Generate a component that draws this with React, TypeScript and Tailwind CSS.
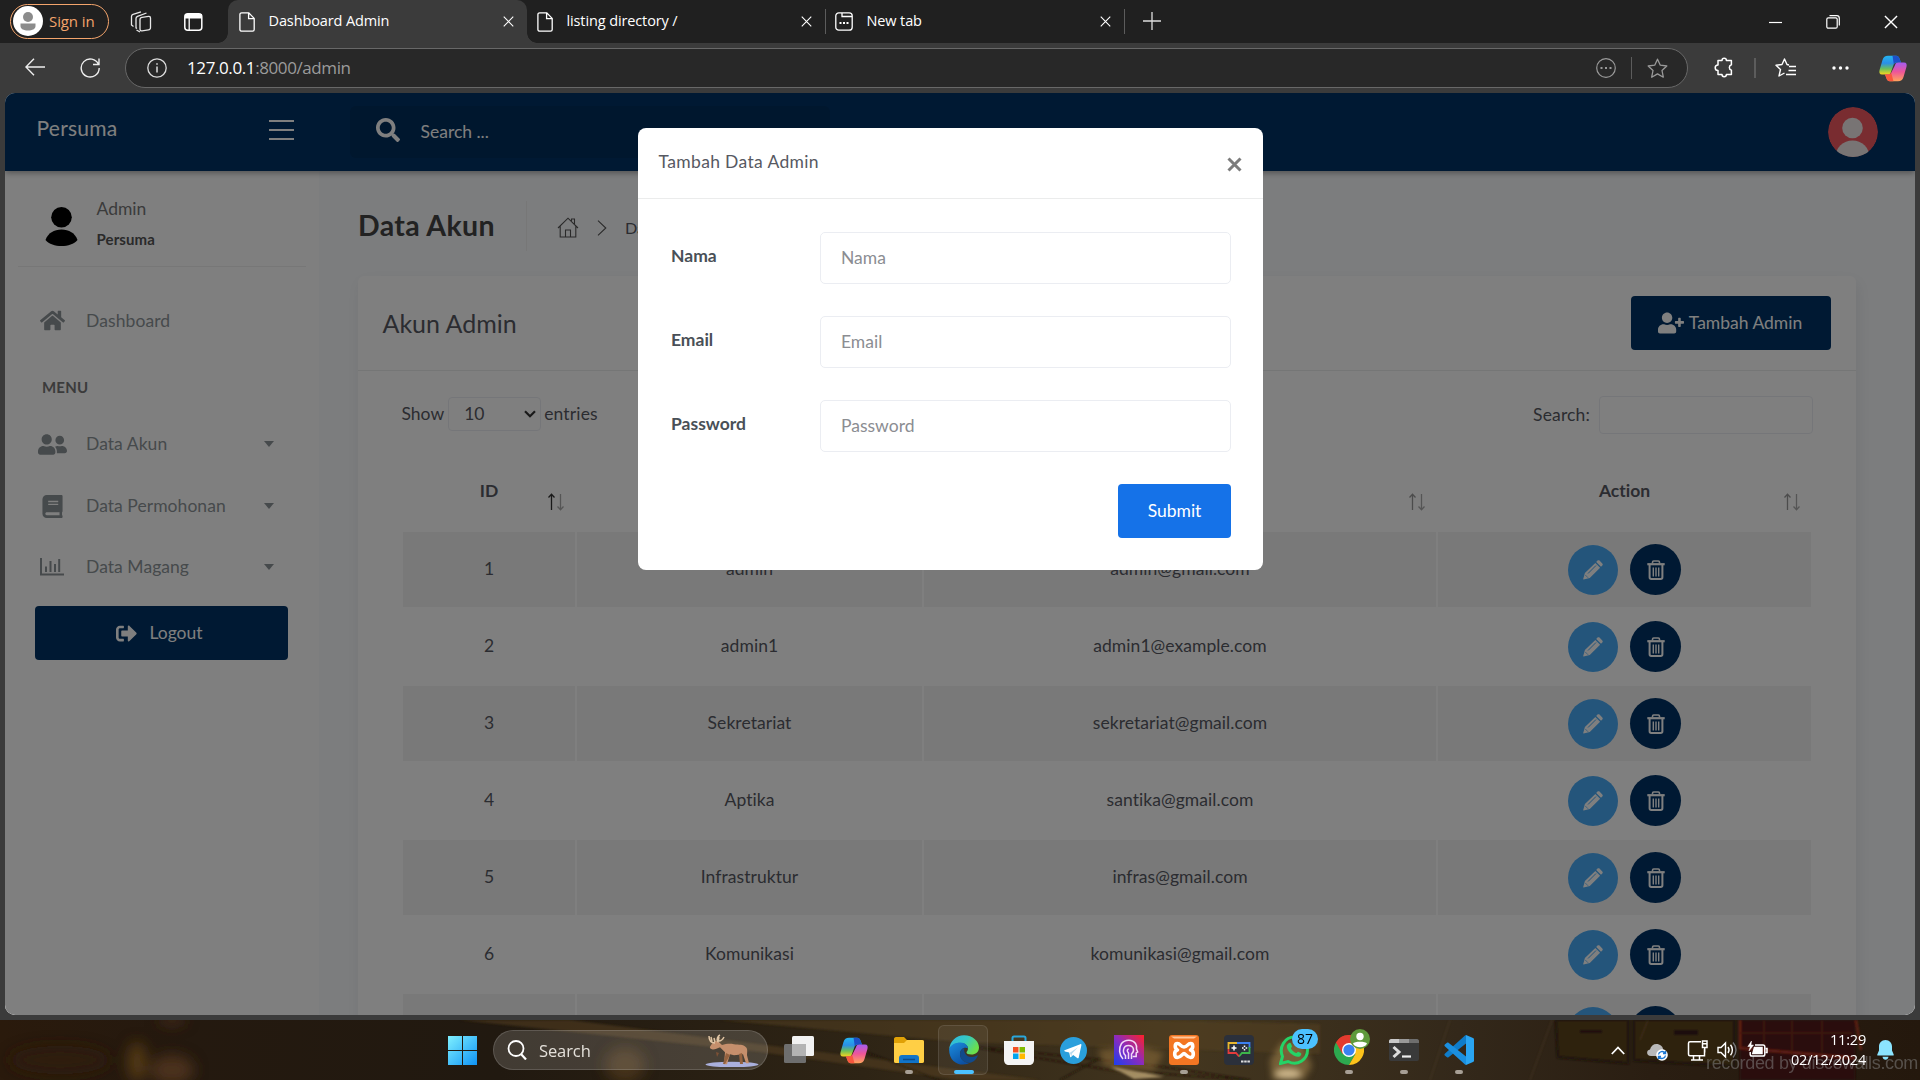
import React from "react";
import {
  FaHome,
  FaUserFriends,
  FaBook,
  FaSignOutAlt,
  FaUserPlus,
  FaSearch,
} from "react-icons/fa";

type P = { className?: string };

const PageIcon = () => (
  <svg className="h-5 w-4 shrink-0" viewBox="0 0 16 20" fill="none" stroke="#fff" strokeWidth="1.3">
    <path d="M2.7.8h7.1l5.4 5.6v11.2c0 1-.7 1.6-1.6 1.6H2.7c-1 0-1.8-.6-1.8-1.6V2.4C.9 1.4 1.7.8 2.7.8zM9.6 1v5.6h5.4" />
  </svg>
);
const CloseX = ({ className }: P) => (
  <svg className={className} viewBox="0 0 12 12" fill="none" stroke="#fff" strokeWidth="1.2">
    <path d="M.8.8l10.4 10.4M11.2.8L.8 11.2" />
  </svg>
);

const Copilot = ({ className }: P) => (
  <svg className={className} viewBox="0 0 28 32" preserveAspectRatio="none">
    <defs>
      <linearGradient id="cpa" x1="0" y1="0" x2="0" y2="1">
        <stop offset="0" stopColor="#25b4f0" />
        <stop offset=".4" stopColor="#2a8fe8" />
        <stop offset=".7" stopColor="#6bbf5a" />
        <stop offset="1" stopColor="#f4d31f" />
      </linearGradient>
      <linearGradient id="cpb" x1="0" y1="0" x2="0" y2="1">
        <stop offset="0" stopColor="#a45cf0" />
        <stop offset=".5" stopColor="#ee5599" />
        <stop offset="1" stopColor="#ffa35c" />
      </linearGradient>
    </defs>
    <path d="M12 1h5c2.300 0 3 1.500 3.700 4l1.300 4h-4c-2 0-3 1-3.600 3L12 20c-.6 2.200-1.600 3-3.600 3H3c-2.500 0-3-2-2.500-5L3.500 6C4.500 2.500 6 1 9 1z" fill="url(#cpa)" />
    <path d="M13.500 1h3.500c2.300 0 3 1.500 3.700 4l1.300 4h-4c-1.500 0-2.500.5-3.200 2z" fill="#1c50c8" />
    <path d="M16 31h-5c-2.300 0-3-1.500-3.700-4L6 23h3c2 0 3-1 3.600-3L16 12c.6-2.200 1.600-3 3.600-3H25c2.500 0 3 2 2.500 5l-3 12c-1 3.500-2.500 5-5.500 5z" fill="url(#cpb)" />
    <path d="M14.500 31H11c-2.300 0-3-1.500-3.700-4L6 23h3c1.500 0 2.600-.7 3.200-2z" fill="#f8573e" />
  </svg>
);

function Tab({ title, active, icon }: { title: string; active?: boolean; icon?: React.ReactNode }) {
  return (
    <div className={active ? "relative flex h-full w-[299px] items-center rounded-t-[10px] bg-[#3b3b3b] pl-[11px] pr-[13px]" : "flex h-full w-[298px] items-center pl-[10px] pr-[13px]"}>
      {active && (
        <>
          <i className="absolute -left-2.5 bottom-0 size-2.5 bg-[radial-gradient(circle_at_0_0,#202020_9.5px,#3b3b3b_10px)]" />
          <i className="absolute -right-2.5 bottom-0 size-2.5 bg-[radial-gradient(circle_at_100%_0,#202020_9.5px,#3b3b3b_10px)]" />
        </>
      )}
      {icon ?? <PageIcon />}
      <span className="ml-[13.500px] flex-1 pb-[1px] text-[14.500px] tracking-[-0.12px] whitespace-nowrap text-white">{title}</span>
      <CloseX className="size-[11px]" />
    </div>
  );
}

function Browser() {
  return (
    <header className="font-[Open_Sans,sans-serif]">
      <div className="flex h-[43px] items-center bg-[#202020]">
        <div className="ml-[10px] mb-px flex h-[35px] w-[99px] items-center rounded-full border-[1.500px] border-[#f3a46c] pl-[2px]">
          <svg className="size-[30px]" viewBox="0 0 30 30">
            <circle cx="15" cy="15" r="15" fill="#fff" />
            <circle cx="15" cy="11" r="5" fill="#8c8c8c" />
            <path d="M7.500 17.500h15v2.500c0 3-3.200 4.500-7.500 4.500s-7.500-1.500-7.500-4.500z" fill="#8c8c8c" />
          </svg>
          <span className="ml-[6px] text-[15px] tracking-[-0.1px] whitespace-nowrap text-[#f3a46c]">Sign in</span>
        </div>
        <svg className="ml-[21px] size-[22px]" viewBox="0 0 22 22" fill="none" stroke="#e8e8e8" strokeWidth="1.300" strokeLinejoin="round">
          <rect x="10" y="6" width="10.500" height="13.500" rx="2" transform="skewY(-8) translate(0 2)" />
          <path d="M7 17.500l-1-.6V7.500c0-1 .6-1.800 1.500-2.200l9-3.300M3.500 15.500L1.500 14V5.500c0-1 .5-1.700 1.500-2.100L11 .8" />
          <path d="M10 21l-3.500-2" />
        </svg>
        <svg className="ml-8 h-[18px] w-[19px]" viewBox="0 0 19 18">
          <rect x=".8" y=".8" width="17" height="16.400" rx="3" fill="none" stroke="#fff" strokeWidth="1.500" />
          <path d="M1 1h17v4.500H1z" fill="#fff" />
          <path d="M5.200 5v12" stroke="#fff" strokeWidth="1.300" />
        </svg>
        <div className="ml-[25px] flex h-full items-center">
          <Tab title="Dashboard Admin" active />
          <Tab title="listing directory /" />
          <div className="h-[25px] w-px bg-[#5c5c5c]" />
          <Tab
            title="New tab"
            icon={
              <svg className="ml-[-1px] h-[19px] w-[18px]" viewBox="0 0 18 19" fill="none" stroke="#fff" strokeWidth="1.300">
                <rect x=".8" y=".8" width="16.400" height="17.400" rx="3" />
                <path d="M7 1v3.500h10" />
                <path d="M4.500 11h2M8 11h2M11.500 11h2" strokeWidth="2" />
              </svg>
            }
          />
          <div className="h-[25px] w-px bg-[#5c5c5c]" />
        </div>
        <svg className="ml-[18px] mb-[2px] size-[18px]" viewBox="0 0 18 18" stroke="#ddd" strokeWidth="1.300">
          <path d="M9 0v18M0 9h18" />
        </svg>
        <div className="ml-auto flex items-center pr-[22px]">
          <svg className="h-3.5 w-[13px]" viewBox="0 0 13 14"><path d="M0 7.500h13" stroke="#fff" strokeWidth="1.200" /></svg>
          <svg className="ml-11 size-[14px]" viewBox="0 0 14 14" fill="none" stroke="#fff" strokeWidth="1.200">
            <rect x=".8" y="2.800" width="10.400" height="10.400" rx="1.500" />
            <path d="M3.500.7h7.300c1.500 0 2.500 1 2.500 2.500v7.300" />
          </svg>
          <CloseX className="ml-11 size-[14px]" />
        </div>
      </div>
      <div className="flex h-[50px] items-center bg-[#3b3b3b]">
        <svg className="ml-[25px] mb-[2px] h-[18px] w-5" viewBox="0 0 20 18" fill="none" stroke="#eee" strokeWidth="1.400">
          <path d="M20 9H1M9 .7L.9 9 9 17.300" />
        </svg>
        <svg className="ml-[35px] mb-px h-5 w-5" viewBox="0 0 20 20" fill="none" stroke="#eee" strokeWidth="1.400">
          <path d="M18.500 6.500A9 9 0 1 0 19.200 10M19 .5v6h-6" />
        </svg>
        <div className="ml-[25px] flex h-10 w-[1563px] items-center rounded-full border border-[#686868] bg-[#282828] pl-[21px] pr-[19px]">
          <svg className="size-[20px]" viewBox="0 0 20 20" fill="none" stroke="#ddd" strokeWidth="1.300">
            <circle cx="10" cy="10" r="9.200" />
            <path d="M10 8.500v6M10 5.200v1.600" strokeWidth="1.500" />
          </svg>
          <span className="ml-[20px] text-[17px] tracking-[-0.4px] text-[#9b9b9b]">
            <span className="text-white">127.0.0.1</span>:8000/admin
          </span>
          <svg className="ml-auto size-[20px]" viewBox="0 0 20 20" fill="none" stroke="#9a9a9a" strokeWidth="1.200">
            <circle cx="10" cy="10" r="9.300" />
            <path d="M4.500 10h2M9 10h2M13.500 10h2" strokeWidth="2" />
          </svg>
          <div className="mx-[15px] h-[22px] w-[1.500px] bg-[#5c5c5c]" />
          <Star className="size-[21px]" />
        </div>
        <svg className="ml-[26px] mb-px h-[21px] w-5" viewBox="0 0 20 21" fill="none" stroke="#fff" strokeWidth="1.500" strokeLinejoin="round">
          <path d="M4 3.500h4a2.200 2.200 0 0 1 4.400 0h5v4.200a2.800 2.800 0 0 0 0 5.400v4.400h-5a2.200 2.200 0 0 1-4.400 0H4v-4a2.600 2.600 0 0 1 0-5.600z" />
        </svg>
        <div className="ml-[20px] h-5 w-[1.500px] bg-[#5c5c5c]" />
        <svg className="ml-[19px] mb-px h-[20px] w-[21px]" viewBox="0 0 21 20" fill="none" stroke="#fff" strokeWidth="1.400" strokeLinejoin="round">
          <path d="M14 7l-2-.5L9.500 1 7 6.500l-6 .8L5.500 11.500 4 18l5.500-3M14 8.500h7M13.500 12.500H21M11 16.500h10" />
        </svg>
        <svg className="ml-[36px] mb-px h-1 w-[17px]" viewBox="0 0 17 4" fill="#fff">
          <circle cx="2" cy="2" r="1.700" /><circle cx="8.500" cy="2" r="1.700" /><circle cx="15" cy="2" r="1.700" />
        </svg>
        <Copilot className="ml-[30px] h-[27px] w-[28px]" />
      </div>
    </header>
  );
}

const Star = ({ className }: P) => (
  <svg className={className} viewBox="0 0 21 21" fill="none" stroke="#9a9a9a" strokeWidth="1.300" strokeLinejoin="round">
    <path d="M10.500 1.200l2.800 6 6.500.8-4.800 4.500 1.300 6.700-5.800-3.300-5.800 3.300L6 12.500 1.200 8l6.500-.8z" />
  </svg>
);

const BarsChart = () => (
  <svg className="h-[18px] w-6" viewBox="0 0 24 18" fill="none" stroke="#8d9498" strokeWidth="2">
    <path d="M1 0v16.500h23M6 14V8.500M10.500 14V3M15 14V6M19.200 14V1" />
  </svg>
);

function NavItem({ icon, label, className }: { icon: React.ReactNode; label: string; className: string }) {
  return (
    <div className={className}>
      <span className="flex w-[34px] justify-center text-[#8d9498]">{icon}</span>
      <span className="ml-[17px] flex-1 text-[17.500px] tracking-[0.05px] text-[#8d9498]">{label}</span>
      <svg className="mr-[45px] h-[6px] w-[10px]" viewBox="0 0 10 6" fill="#8d9498"><path d="M0 0h10L5 6z" /></svg>
    </div>
  );
}

function Sidebar() {
  return (
    <aside className="h-[844px] w-[314px] shrink-0 bg-white shadow-[4px_4px_10px_rgba(69,65,78,0.06)]">
      <div className="mx-[13px] flex h-[96px] border-b border-[#eee] pl-[27px]">
        <svg className="mt-[36px] h-[39px] w-[33px]" viewBox="0 0 33 39">
          <circle cx="16.500" cy="10.300" r="10.300" />
          <path d="M.5 33C3 26 9 22.500 16.500 22.500S30 26 32.500 33C29 37 23 39 16.500 39S4 37 .5 33z" />
        </svg>
        <div className="ml-[18.500px] mt-[27px] leading-none">
          <div className="text-[17.500px] leading-[22px] text-[#777]">Admin</div>
          <div className="mt-[9px] text-[15px] leading-[20px] tracking-[0.1px] font-bold text-[#555]">Persuma</div>
        </div>
      </div>
      <div className="mt-[34px] flex h-[40px] items-center pl-[30px]">
        <span className="flex w-[34px] justify-center pb-px text-[25px] text-[#8d9498]"><FaHome /></span>
        <span className="ml-[17px] text-[17.500px] tracking-[0.1px] text-[#8d9498]">Dashboard</span>
      </div>
      <div className="mt-[36px] pl-[37px] text-[15px] leading-[20px] tracking-[0.2px] font-bold text-[#777]">MENU</div>
      <NavItem className="mt-[27px] flex h-[40px] items-center pl-[30px]" icon={<FaUserFriends size={29} />} label="Data Akun" />
      <NavItem className="mt-[22px] flex h-[40px] items-center pl-[30px]" icon={<FaBook size={23} />} label="Data Permohonan" />
      <NavItem className="mt-[21px] flex h-[40px] items-center pl-[30px]" icon={<BarsChart />} label="Data Magang" />
      <div className="ml-[30px] mt-[19px] flex h-[54px] w-[253px] items-center justify-center rounded-[4px] bg-[#003366] pr-[4px] text-[17.500px] text-white">
        <FaSignOutAlt size={21} className="mr-[12px]" />
        Logout
      </div>
    </aside>
  );
}

const rows: [string, string, string][] = [
  ["1", "admin", "admin@gmail.com"],
  ["2", "admin1", "admin1@example.com"],
  ["3", "Sekretariat", "sekretariat@gmail.com"],
  ["4", "Aptika", "santika@gmail.com"],
  ["5", "Infrastruktur", "infras@gmail.com"],
  ["6", "Komunikasi", "komunikasi@gmail.com"],
  ["", "", ""],
];

const Trash = () => (
  <svg className="h-5 w-[18px]" viewBox="0 0 18 20" fill="none" stroke="#fff">
    <path d="M.3 4.200h17.400" strokeWidth="2.200" />
    <path d="M5.500 3.600V2.200c0-.7.500-1.200 1.200-1.200h4.600c.7 0 1.200.5 1.200 1.200v1.400" strokeWidth="1.600" />
    <path d="M2.600 5v12.200c0 1 .7 1.700 1.700 1.700h9.400c1 0 1.700-.7 1.700-1.700V5" strokeWidth="2" />
    <path d="M6.300 7.500v9M9 7.500v9M11.700 7.500v9" strokeWidth="1.400" />
  </svg>
);

const Pencil = () => (
  <svg className="size-[20px]" viewBox="0 0 20 20" fill="#fff">
    <path d="M13.200 1.900l1.300-1.300c.6-.6 1.400-.6 2 0l2.800 2.800c.6.6.6 1.400 0 2L18 6.700z" />
    <path d="M12.300 2.900l4.800 4.800L6.800 18 .6 19.600c-.3 0-.5-.2-.4-.5L1.900 13z" />
    <path d="M5 13.500l8-8" stroke="#48abf7" strokeWidth="1" />
    <path d="M2.300 15l2.800 2.800" stroke="#48abf7" strokeWidth=".7" />
  </svg>
);

function Sort({ up }: { up?: boolean }) {
  return (
    <svg className="absolute right-[10px] top-[38px] h-[18px] w-[18px]" viewBox="0 0 18 18" fill="none" strokeWidth="1.300">
      <path d="M4.500 17V1.500M1.500 4.500l3-3.200 3 3.200" stroke={up ? "#333" : "#999"} />
      <path d="M13.500 1v15.500M10.500 13.500l3 3.200 3-3.200" stroke="#aaa" />
    </svg>
  );
}

const cols = "grid grid-cols-[172px_345px_512px_373px] gap-x-[2px]";

function Content() {
  return (
    <main className="min-w-0 flex-1 bg-[#f9fbfd] pl-[39px] text-[#575962]">
      <div className="flex h-[105px] items-center pt-[4px]">
        <h1 className="w-[137px] text-[28.500px] font-bold tracking-[0.35px] whitespace-nowrap text-[#444]">Data Akun</h1>
        <div className="ml-[31px] h-[50px] w-px bg-[#eee]" />
        <svg className="ml-[30px] mt-1 h-[21px] w-[22px]" viewBox="0 0 22 21" fill="none" stroke="#555" strokeWidth="1.100">
          <path d="M1 11L11 1.200 21 11M3.200 9v11h15.600V9M8.500 20v-7h5v7M14.500 4V2h3v5" />
        </svg>
        <svg className="ml-[18px] mt-1 h-4 w-[10px]" viewBox="0 0 10 16" fill="none" stroke="#555" strokeWidth="1.100"><path d="M1 .7L8.800 8 1 15.300" /></svg>
        <span className="ml-[18px] mt-[6px] text-[16.200px]">Data Akun</span>
      </div>
      <section className="h-[760px] w-[1498px] rounded-[6px] bg-white shadow-[2px_6px_15px_rgba(69,65,78,0.1)]">
        <div className="flex h-[95px] items-center justify-between border-b border-[#ebecec] pl-[24.500px] pr-[25px]">
          <h2 className="pt-[2px] text-[25px]">Akun Admin</h2>
          <div className="flex h-[54px] w-[200px] items-center justify-center rounded-[4px] bg-[#003366] pr-[2px] text-[17.500px] whitespace-nowrap text-white">
            <FaUserPlus size={26} className="mr-[5px]" />
            Tambah Admin
          </div>
        </div>
        <div className="flex h-[61px] items-end justify-between pl-[43.500px] pr-[43px] text-[17.500px]">
          <div className="mb-px flex h-[34px] items-center">
            Show
            <div className="ml-[4px] mr-[3px] flex h-[34px] w-[93px] items-center justify-between rounded-[4px] border border-[#ebedf2] pl-[15px] pr-[4px]">
              10
              <svg className="h-[8px] w-[12px]" viewBox="0 0 12 8" fill="none" stroke="#333" strokeWidth="2.200"><path d="M1 1.200l5 5 5-5" /></svg>
            </div>
            <span className="tracking-[0.15px]">entries</span>
          </div>
          <div className="mb-[-2px] flex h-[38px] items-center">
            <span className="tracking-[0.15px]">Search:</span>
            <div className="ml-[9px] h-[38px] w-[214px] rounded-[4px] border border-[#ebedf2]" />
          </div>
        </div>
        <div className="ml-[45px] mt-[23px] text-[17.500px]">
          <div className={cols + " h-[77px] text-center font-bold"}>
            {["ID", "Nama", "Email", "Action"].map((h, i) => (
              <div key={h} className="relative pt-[23px] leading-[26px]">
                {h}
                <Sort up={i === 0} />
              </div>
            ))}
          </div>
          {rows.map((r, i) => (
            <div key={i} className={cols + " mb-[2px] h-[75px] text-center leading-[73px]"}>
              {r.map((c, j) => (
                <div key={j} className={i % 2 ? "tracking-[0.06px]" : "bg-[#f2f2f2] tracking-[0.06px]"}>{c}</div>
              ))}
              <div className={i % 2 ? "flex items-center justify-center gap-[12px]" : "flex items-center justify-center gap-[12px] bg-[#f2f2f2]"}>
                <span className="flex size-[50px] items-center justify-center rounded-full bg-[#48abf7]"><Pencil /></span>
                <span className="flex size-[51px] items-center justify-center rounded-full bg-[#003366]"><Trash /></span>
              </div>
            </div>
          ))}
        </div>
      </section>
    </main>
  );
}

function Modal() {
  return (
    <div className="absolute left-[633px] top-[35px] h-[442px] w-[625px] rounded-[8px] bg-white">
      <div className="flex h-[71px] items-start justify-between border-b border-[#ebecec] pl-[20.500px] pr-[21px]">
        <span className="mt-[21px] text-[17.500px] leading-[26px] tracking-[0.35px] text-[#575962]">Tambah Data Admin</span>
        <svg className="mt-[29px] size-[15px]" viewBox="0 0 15 15" stroke="#7c7c7c" strokeWidth="3"><path d="M1.500 1.500l12 12M13.500 1.500l-12 12" /></svg>
      </div>
      <div className="flex flex-col gap-[32px] pl-[33px] pr-[32px] pt-[33px] text-[17.500px]">
        {["Nama", "Email", "Password"].map((f) => (
          <label key={f} className="flex h-[52px]">
            <span className="w-[149px] pt-[10.500px] leading-[26px] font-bold text-[#495057]">{f}</span>
            <span className="h-[52px] flex-1 rounded-[5px] border border-[#ebedf2] pl-[20px] leading-[50px] text-[#8b8d92]">{f}</span>
          </label>
        ))}
        <div className="flex h-[54px] w-[113px] items-center justify-center self-end rounded-[4px] bg-[#1572e8] text-white">Submit</div>
      </div>
    </div>
  );
}

function WebPage() {
  return (
    <div className="relative mx-[5px] h-[922px] overflow-hidden rounded-[10px] bg-white font-[Lato,sans-serif] [font-variant-ligatures:none]">
      <div className="relative z-10 flex h-[78px] items-center bg-[#003366] text-white shadow-[0_2px_6px_rgba(0,0,0,0.35)]">
        <span className="ml-[31.500px] w-[232.500px] pb-[8px] text-[21px] tracking-[0.25px]">Persuma</span>
        <svg className="h-[20px] w-[25px] mb-[5px]" viewBox="0 0 25 20" stroke="#fff" strokeWidth="2"><path d="M0 1h25M0 10h25M0 19h25" /></svg>
        <div className="ml-[56px] mb-px flex h-[52px] w-[480px] items-center rounded-[6px] bg-[#002e5c] pl-[25.500px] text-[17.500px]">
          <FaSearch size={24} className="mb-[4px]" />
          <span className="ml-[21px] pt-px">Search ...</span>
        </div>
        <svg className="ml-auto mr-[37px] size-[50px]" viewBox="0 0 50 50">
          <defs><clipPath id="avatar"><circle cx="25" cy="25" r="25" /></clipPath></defs>
          <g clipPath="url(#avatar)">
            <circle cx="25" cy="25" r="25" fill="#f25961" />
            <circle cx="24.500" cy="21" r="10.300" fill="#f0e8e8" />
            <ellipse cx="24.500" cy="50" rx="17" ry="16.500" fill="#f0e8e8" />
          </g>
        </svg>
      </div>
      <div className="flex">
        <Sidebar />
        <Content />
      </div>
      <div className="absolute inset-0 z-20 bg-black/50">
        <Modal />
      </div>
    </div>
  );
}

function Wallpaper() {
  return (
    <svg className="absolute inset-0 h-[60px] w-[1920px]" viewBox="0 0 1920 60">
      <defs>
        <linearGradient id="wall">
          <stop offset="0" stopColor="#2a1a0c" />
          <stop offset=".1" stopColor="#24190f" />
          <stop offset=".26" stopColor="#211910" />
          <stop offset=".45" stopColor="#2e2415" />
          <stop offset=".62" stopColor="#43361f" />
          <stop offset=".76" stopColor="#33281a" />
          <stop offset=".86" stopColor="#2a1e12" />
          <stop offset="1" stopColor="#24180d" />
        </linearGradient>
        <filter id="soft" x="-50%" y="-100%" width="200%" height="300%"><feGaussianBlur stdDeviation="7" /></filter>
        <filter id="edge"><feGaussianBlur stdDeviation="1" /></filter>
        <filter id="glow" x="-50%" y="-50%" width="200%" height="200%"><feGaussianBlur stdDeviation="3" /></filter>
      </defs>
      <path d="M0 0h1920v60H0z" fill="url(#wall)" />
      <g filter="url(#soft)">
        <ellipse cx="137" cy="42" rx="9" ry="20" fill="#553b12" />
        <ellipse cx="172" cy="50" rx="22" ry="15" fill="#4c311c" />
        <ellipse cx="60" cy="40" rx="50" ry="14" fill="#2e1d0e" />
        <ellipse cx="172" cy="0" rx="14" ry="4" fill="#4c2f1b" />
        <ellipse cx="625" cy="45" rx="20" ry="18" fill="#5c401a" opacity=".6" />
      </g>
      <g filter="url(#edge)">
        <path d="M460 0h110l470 60h-80L760 32z" fill="#5a4322" opacity=".5" />
        <path d="M720 0h420l180 4v30L960 22z" fill="#55421f" opacity=".5" />
        <path d="M1110 50L960 25l190 20 100 15zM860 30l80 30M1060 60l40-22" stroke="#1c130a" fill="none" />
        <path d="M1110 46l40 8 14 3-30 2z" fill="#e8cc94" opacity=".6" />
      </g>
      <g filter="url(#glow)">
        <path d="M1098 30l40-5 26 8-10 18-50-5z" fill="#96743c" opacity=".5" />
        <path d="M1270 40l12-18 20 0 10 24-8 14h-32z" fill="#b08f52" opacity=".5" />
        <ellipse cx="1288" cy="54" rx="13" ry="5" fill="#f2dcae" opacity=".7" />
      </g>
      <g filter="url(#edge)">
        <path d="M1556 0h72v43l-70-6zM1634 0h100v46l-100-6z" fill="#2f200e" stroke="#1c1208" strokeWidth="2" />
        <path d="M1580 10h22v3h-22zM1674 10h24v5h-24z" fill="#1a1109" />
        <path d="M1740 0h115v60h-115z" fill="#2a0f0a" />
        <path d="M1740 0v28l115 10M1856 0l5 30" stroke="#6a2418" fill="none" strokeWidth="2" />
        <path d="M1740 13h112M1764 0v28M1792 0v30M1822 0v32" stroke="#40160e" fill="none" strokeWidth="1.500" />
        <path d="M1430 60l20-60M1530 60l22-60M1640 20l8-20" stroke="#6a5638" opacity=".35" />
      </g>
    </svg>
  );
}

const Cell = ({ children, dot, active }: { children: React.ReactNode; dot?: boolean; active?: boolean }) => (
  <div className="relative flex w-[55px] shrink-0 items-center justify-center">
    {active && <i className="absolute left-[2px] top-[5px] size-[50px] rounded-[6px] border border-white/10 bg-white/[0.06]" />}
    {children}
    {dot && <i className="absolute bottom-[6px] left-[24px] h-[4px] w-[8px] rounded-full bg-[#a79f95]" />}
    {active && <i className="absolute bottom-[6px] left-[18px] h-[4px] w-[20px] rounded-full bg-[#4cc2ff]" />}
  </div>
);

function TaskApps() {
  const s = "relative size-[30px]";
  return (
    <>
      <Cell>
        <svg className={s} viewBox="0 0 30 30">
          <rect y="9" width="22" height="19" rx="1.500" fill="#6e6e6e" /><rect x="8" y="1" width="22" height="20" rx="1.500" fill="#f1f1f1" /><path d="M8 9h14v12H8z" fill="#b3b3b3" />
        </svg>
      </Cell>
      <Cell><Copilot className="h-[27px] w-[28px]" /></Cell>
      <Cell dot>
        <svg className={s} viewBox="0 0 30 30">
          <path d="M0 4c0-1 .6-2 2-2h8l3 3h15c1.300 0 2 .8 2 2v19c0 1.200-.7 2-2 2H2c-1.300 0-2-.8-2-2z" fill="#e0a106" />
          <path d="M0 8h10l3-3h15c1.300 0 2 .8 2 2v19c0 1.200-.7 2-2 2H2c-1.300 0-2-.8-2-2z" fill="#ffcf45" />
          <path d="M5 28v-5c0-1.700 1-3 3-3h14c2 0 3 1.300 3 3v5z" fill="#1174c8" /><path d="M9 24.500h12" stroke="#0a4b8c" strokeWidth="1.500" />
        </svg>
      </Cell>
      <Cell active>
        <svg className={s} viewBox="0 0 30 30">
          <defs>
            <linearGradient id="ea" x1="0" y1="0" x2="1" y2=".5"><stop stopColor="#2eb4e8" /><stop offset=".55" stopColor="#36c9c0" /><stop offset="1" stopColor="#6be04c" /></linearGradient>
            <linearGradient id="eb" x1="0" y1="0" x2=".6" y2="1"><stop stopColor="#1b8de0" /><stop offset="1" stopColor="#0c4fa0" /></linearGradient>
          </defs>
          <path d="M.2 14C1 6 7.200.2 15 .2c9 0 15 6.300 15 12.300 0 4.500-3.500 7-7.500 7-3.500 0-5-1-5-2s1.500-1.500 1.500-4c0-3-3-5.500-7-5.500-5.500 0-10 3-11.800 6z" fill="url(#ea)" />
          <path d="M.1 14C2 9.500 6.500 7.500 11.500 7.500c4.500 0 7.500 3 7.500 6-4-2-8 1-8 5.500 0 5 4.500 9.500 10.500 8.500C14 32 0 29.500.1 14z" fill="url(#eb)" />
          <path d="M11 19c0-3 1.600-5.300 4.500-6-1.500 4 2 9 6.500 9 2.800 0 4.700-1 6-1.600.6-.2.900.2.600.8C27 24.500 24 27.500 21 27.700 15 28 11 24 11 19z" fill="#114a8b" />
        </svg>
      </Cell>
      <Cell>
        <svg className={s} viewBox="0 0 30 30">
          <path d="M8.500 7V3c0-1 .6-1.500 1.500-1.500h10c.9 0 1.500.5 1.500 1.500v4" fill="none" stroke="#2aa7dc" strokeWidth="2" />
          <path d="M0 6h30v19c0 3-2 5-5 5H5c-3 0-5-2-5-5z" fill="#f4f4f4" />
          <path d="M9 12h5.500v5.500H9z" fill="#f25022" /><path d="M15.500 12H21v5.500h-5.500z" fill="#7fba00" /><path d="M9 18.500h5.500V24H9z" fill="#00a4ef" /><path d="M15.500 18.500H21V24h-5.500z" fill="#ffb900" />
        </svg>
      </Cell>
      <Cell>
        <svg className="size-[27px]" viewBox="0 0 30 30">
          <circle cx="15" cy="15" r="15" fill="#2a9fdc" /><path d="M5 14.800L22.500 8c.9-.3 1.500.2 1.200 1.400l-2.900 13.300c-.2 1-.9 1.200-1.700.7l-4.500-3.300-2.300 2.200c-.5.4-1 .3-1.100-.5l-1-4.600L5.500 16c-.9-.3-1-.9-.5-1.200z" fill="#fff" /><path d="M11 17.500l9-6-6.800 7.200-.6 3.200z" fill="#b9dcef" />
        </svg>
      </Cell>
      <Cell>
        <svg className={s} viewBox="0 0 30 30">
          <defs><linearGradient id="ai" x1="0" y1="1" x2="1" y2="0"><stop stopColor="#1a3ff0" /><stop offset=".5" stopColor="#8b2bbd" /><stop offset="1" stopColor="#ff2028" /></linearGradient></defs>
          <path d="M0 0h30v30H0z" fill="url(#ai)" />
          <path d="M9 24c-4-4-4.500-11-1.500-15.500 3.500-4.500 11-4.500 14 0 1.300 2 1.300 4 1 5.500l1.200 3-1.500 1v3.500h-3.500M11.500 24v-3.500c-3.500-3-2.500-10 3-10s6.500 6 3 8.500V24M14.500 24v-6c-1.800-1.500-1.500-4 .3-4" fill="none" stroke="#f3d9f5" strokeWidth="1.500" />
        </svg>
      </Cell>
      <Cell dot>
        <svg className={s} viewBox="0 0 30 30">
          <rect width="30" height="30" rx="3" fill="#f37623" /><path d="M2 1.500h26l-3 2H5z" fill="#ffc79c" />
          <path d="M8.500 8.500c-3 0-3 5 0 6.500-4 1-3.500 7.500 0 7.500s5-4 6.500-4 3 4 6.500 4 4-6.500 0-7.500c3-1.500 3-6.500 0-6.500s-3 3.500-6.500 3.500-3.500-3.500-6.500-3.500z" fill="none" stroke="#fff" strokeWidth="3.600" strokeLinejoin="round" />
        </svg>
      </Cell>
      <Cell>
        <svg className={s} viewBox="0 0 30 30">
          <rect width="30" height="30" rx="4" fill="#2b303b" />
          <g fill="none" strokeWidth="1.800"><path d="M4.500 14V8H13" stroke="#e9b72d" /><path d="M13 8h12.500v5" stroke="#3c7ff0" /><path d="M25.500 12v6H18l-3 3.500" stroke="#3db54a" /><path d="M15 21.500L12 18H4.500v-4" stroke="#e23b3b" /></g>
          <path d="M10 10.500v5M7.500 13h5" stroke="#fff" strokeWidth="1.500" /><path d="M20.500 10.500v1.600M20.500 14v1.600M18 13h1.600M21.600 13h1.600" stroke="#fff" strokeWidth="1.500" />
          <path d="M17 26.500h9" stroke="#ddd" strokeWidth="2" strokeDasharray="2.500 .7" />
        </svg>
      </Cell>
      <Cell>
        <svg className={s} viewBox="0 0 30 30">
          <path d="M1.500 28.500l2-7C-.5 12 6 2 15.500 2 23 2 28.500 8 28.500 15c0 9.500-10 16.500-19.500 11.500z" fill="none" stroke="#25d366" strokeWidth="3" />
          <path d="M9.500 8.500c1-1 2-.9 2.500.2l1 2.500c.2.700-1.300 1.600-1 2.200 1 2 3 3.900 5 4.600.7.200 1.500-1.600 2.200-1.300l2.600 1.300c.9.500.5 2-.5 3-4 3.500-14-4.500-13.500-10 .1-1 .8-1.800 1.700-2.500z" fill="#25d366" />
        </svg>
        <span className="absolute left-[26px] top-[9px] flex h-[20px] w-[26px] items-center justify-center rounded-full bg-[#4cc2ff] font-[Open_Sans,sans-serif] text-[14px] leading-none text-black">87</span>
      </Cell>
      <Cell dot>
        <svg className={s} viewBox="0 0 30 30">
          <path d="M15 15L2 7.500A15 15 0 0 1 28 7.500z" fill="#e33b2e" /><path d="M15 15L2 7.500A15 15 0 0 0 15 30l6.500-11.200z" fill="#2da94f" /><path d="M15 15l6.500 3.800L15 30A15 15 0 0 0 28 7.500H15z" fill="#fdc31b" /><path d="M2 7.500L8.500 19 15 8h13A15 15 0 0 0 2 7.500z" fill="#e33b2e" />
          <circle cx="15" cy="15" r="7" fill="#fff" /><circle cx="15" cy="15" r="5.600" fill="#3b82f0" />
        </svg>
        <svg className="absolute left-[29px] top-[9px] size-[20px]" viewBox="0 0 20 20"><circle cx="10" cy="10" r="10" fill="#5f9a3c" /><circle cx="10" cy="7.500" r="3.700" fill="#fff" /><path d="M3 14.500c1-2.500 13-2.500 14 0-2 5-12 5-14 0z" fill="#fff" /></svg>
      </Cell>
      <Cell dot>
        <svg className={s} viewBox="0 0 30 30">
          <rect y="4" width="30" height="22" rx="2" fill="#3a3a3a" /><path d="M0 8V6c0-1 1-2 2-2h8v4z" fill="#c9c9c9" /><path d="M10 4h10v4H10z" fill="#999" /><path d="M20 4h8c1 0 2 1 2 2v2H20z" fill="#6e6e6e" />
          <path d="M4.500 12l5.500 5-5.500 5" fill="none" stroke="#ddd" strokeWidth="3" /><path d="M13 21.500h9" stroke="#eee" strokeWidth="2.200" />
        </svg>
      </Cell>
      <Cell dot>
        <svg className={s} viewBox="0 0 30 30">
          <path d="M22 0l7 3c.6.300 1 .8 1 1.500v21c0 .7-.4 1.200-1 1.500l-7 3z" fill="#2aa5f2" /><path d="M22 0v8.500L4.500 22.300c-.5.400-1 .4-1.500 0L.8 20.400c-.5-.5-.5-1.200 0-1.700L21 .5z" fill="#0f7cc9" /><path d="M22 30v-8.500L4.500 7.700c-.5-.4-1-.4-1.500 0L.8 9.600c-.5.5-.5 1.200 0 1.700L21 29.500z" fill="#1b8fdf" />
        </svg>
      </Cell>
    </>
  );
}

const Moose = () => (
  <svg className="h-[33px] w-[54px]" viewBox="0 0 54 33">
    <ellipse cx="27" cy="30.500" rx="26.500" ry="2.800" fill="#aab0dd" />
    <path d="M17 11c4-1 7-1.500 12-.8 5 .5 9 0 12 3 2 2 1 6 1 8l2 8h-3l-3-9-9 1-4-1-3 10h-3l1-12-5-5c-3 1-6 3-8 2-2-.5-3-2-1-4 1-2 4-5 7-4z" fill="#c58f6c" />
    <path d="M25 21l-5 9h-2l3-11zM37 19l1 11h-3l-1-10z" fill="#94623f" />
    <path d="M10 9C5 9 4 5 4 2M7 8L6 3M10 8L9 4M13 8c-2-3 0-6 2-7M14 7c2 0 4-2 5-4M13 8l1-5" stroke="#dfc4a4" strokeWidth="1.500" fill="none" />
    <path d="M11 18l1 5 2-4z" fill="#7d5135" />
  </svg>
);

function Taskbar() {
  return (
    <footer className="relative h-[60px] overflow-hidden bg-[#241a10] font-[Open_Sans,sans-serif]">
      <Wallpaper />
      <span className="absolute left-[1706px] top-[31px] z-10 font-['Liberation_Sans',sans-serif] text-[18px] leading-[24px] tracking-[-0.35px] whitespace-nowrap text-[#888]/50">recorded by discowalls.com</span>
      <div className="relative z-20 flex h-[60px] items-stretch text-white">
        <svg className="ml-[448px] mt-[16px] size-[29px]" viewBox="0 0 29 29">
          <defs><linearGradient id="win" x1="0" y1="0" x2="1" y2="1"><stop stopColor="#7ff0ff" /><stop offset="1" stopColor="#0f93f5" /></linearGradient></defs>
          <path d="M0 0h14v14H0zM15 0h14v14H15zM0 15h14v14H0zM15 15h14v14H15z" fill="url(#win)" />
        </svg>
        <div className="ml-[16px] mt-[10px] flex h-[40px] w-[275px] items-center rounded-full border border-white/15 bg-white/15 pl-[13px] pr-[8px]">
          <svg className="size-[20px]" viewBox="0 0 20 20" fill="none" stroke="#fff" strokeWidth="1.800"><circle cx="9" cy="8.500" r="7.500" /><path d="M14 14l5 5.500" strokeWidth="2.200" /></svg>
          <span className="ml-[12px] flex-1 pt-[2px] text-[16.500px] tracking-[-0.1px] text-[#e4e0da]">Search</span>
          <Moose />
        </div>
        <div className="ml-[3px] flex"><TaskApps /></div>
        <div className="ml-auto flex items-center pr-[26px]">
          <svg className="h-[9px] w-[14px]" viewBox="0 0 14 9" fill="none" stroke="#fff" strokeWidth="1.800"><path d="M.8 8L7 1.500 13.200 8" /></svg>
          <svg className="ml-[22px] mt-[3px] h-[18px] w-[21px]" viewBox="0 0 21 18"><path d="M4 13c-5 0-5-6-1-6.500C4 2 8 0 12 1.500c3 1 4 3 4 5 4 0 4 6.500 0 6.500z" fill="#b8b8b8" /><circle cx="15" cy="12" r="5.800" fill="#fff" /><path d="M11.500 11.500a3.600 3.600 0 0 1 6.500-1.500M18.500 12.500a3.600 3.600 0 0 1-6.500 1.500M18.500 8v2.500H16M11.500 16v-2.500H14" fill="none" stroke="#1976d2" strokeWidth="1.400" /></svg>
          <svg className="ml-[19px] size-[21px]" viewBox="0 0 21 21" fill="none" stroke="#fff" strokeWidth="1.500"><path d="M14 1.800H3c-1 0-1.500.6-1.500 1.500v11c0 .9.500 1.500 1.500 1.500h14.500V9M6.500 16v4M12.500 16v4M4 20h12M15.500 1h4.500v6.500h-4.500zM17.700 7.500v5M15.500 3.800H20" /></svg>
          <svg className="ml-[9px] h-[18px] w-[20px]" viewBox="0 0 20 18" fill="none" stroke="#fff" strokeWidth="1.400"><path d="M1 6.500h3L8.500 2v14L4 11.500H1zM11 6c1.300 1.800 1.300 4.200 0 6M13.500 3.800c2.500 3 2.500 7.400 0 10.400" /><path d="M16 1.500c4 4.500 4 10.500 0 15" stroke="#777" /></svg>
          <svg className="ml-[10px] h-[18px] w-[21px]" viewBox="0 0 21 18" fill="none" stroke="#fff" strokeWidth="1.500"><path d="M8 4h8c1 0 1.800.8 1.800 1.800v7.400c0 1-.8 1.800-1.800 1.800H5c-1 0-1.800-.8-1.800-1.800V11" /><path d="M18.500 7.500h1.500v4h-1.500" /><path d="M7.500 6.500h7.500v6H5.800z" fill="#fff" /><path d="M4.500 0L.8 5.500h2.500L2 10l4.500-6H4z" fill="#fff" strokeWidth=".5" /></svg>
          <div className="ml-[20px] w-[78px] text-right text-[14.500px] leading-[20px] tracking-[-0.2px] whitespace-nowrap"><div>11:29</div><div>02/12/2024</div></div>
          <svg className="ml-[11px] h-[20px] w-[17px]" viewBox="0 0 17 20" fill="#8be4ff"><path d="M8.500 0C4.500 0 2 3 2 6.500v4L.3 14.500c-.2.600 0 1 .6 1h15.200c.6 0 .8-.4.600-1L15 10.500v-4C15 3 12.500 0 8.500 0zM5.500 16.800h6c-.3 1.900-1.500 3-3 3s-2.700-1.100-3-3z" /></svg>
        </div>
      </div>
    </footer>
  );
}

export default function App() {
  return (
    <div className="h-[1080px] w-[1920px] overflow-hidden bg-[#3b3b3b]">
      <Browser />
      <WebPage />
      <div className="h-[5px]" />
      <Taskbar />
    </div>
  );
}
